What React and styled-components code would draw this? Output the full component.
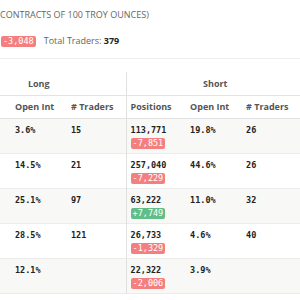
import React from "react";
import styled, { createGlobalStyle } from "styled-components";

const Global = createGlobalStyle`
  html, body { margin: 0; padding: 0; background: #fff; }
  body { overflow: hidden; width: 300px; height: 300px; }
`;

const Page = styled.div`
  width: 300px;
  height: 300px;
  overflow: hidden;
  font-family: "Open Sans", "Liberation Sans", sans-serif;
  color: #555;
`;

const Title = styled.div`
  font-size: 9px;
  line-height: 14px;
  color: #666;
  text-transform: uppercase;
  padding: 8px 0 0 0;
  white-space: nowrap;
`;

const Summary = styled.div`
  display: flex;
  align-items: center;
  gap: 8px;
  margin-top: 13px;
  padding: 0 0 11px 1px;
  border-bottom: 1px solid #eeeeee;
  font-size: 9px;
  line-height: 12px;
  color: #666;
`;

const Strong = styled.b`
  color: #222;
  font-weight: 700;
`;

const Badge = styled.span`
  display: inline-block;
  font-family: "DejaVu Sans Mono", "Liberation Mono", monospace;
  font-size: 8.5px;
  line-height: 11px;
  padding: 0 2px;
  border-radius: 2px;
  color: #fff;
  background: ${(p) => (p.$up ? "#62bd86" : "#f47f7f")};
`;

const Clip = styled.div`
  margin-top: 13px;
  overflow: hidden;
`;

const Table = styled.table`
  border-collapse: collapse;
  table-layout: fixed;
  width: 352px;
  margin-left: -48px;
`;

const GroupTh = styled.th`
  height: 23px;
  font-size: 9px;
  line-height: 12px;
  font-weight: 700;
  color: #555;
  text-align: center;
  border-bottom: 1px solid #e3e3e3;
  border-left: ${(p) => (p.$sep ? "1px solid #e0e0e0" : "none")};
  padding: 0;
`;

const ColTh = styled.th`
  height: 22px;
  font-size: 9px;
  line-height: 12px;
  font-weight: 700;
  color: #555;
  text-align: left;
  padding: 0 0 0 ${(p) => p.$pad || 4}px;
  white-space: nowrap;
  border-bottom: 1px solid #e3e3e3;
  border-left: ${(p) => (p.$sep ? "1px solid #e0e0e0" : "none")};
`;

const Row = styled.tr`
  background: ${(p) => (p.$alt ? "#f8f9f7" : "#fff")};
  border-bottom: 1px solid #ececec;
`;

const Td = styled.td`
  height: 35px;
  vertical-align: top;
  padding: 6px 0 0 ${(p) => p.$pad || 4}px;
  box-sizing: border-box;
  font-size: 0;
  line-height: 0;
  border-left: ${(p) => (p.$sep ? "1px solid #e0e0e0" : "none")};
`;

const Num = styled.div`
  font-family: "DejaVu Sans Mono", "Liberation Mono", monospace;
  font-weight: 700;
  font-size: 8.5px;
  line-height: 11px;
  color: #222;
  white-space: nowrap;
`;

const CellBadge = styled(Badge)`
  display: block;
  width: fit-content;
  margin-top: 2px;
`;

const rows = [
  { lOi: "3.6%", lTr: "15", sPos: "113,771", sChg: "-7,851", up: false, sOi: "19.8%", sTr: "26" },
  { lOi: "14.5%", lTr: "21", sPos: "257,040", sChg: "-7,229", up: false, sOi: "44.6%", sTr: "26" },
  { lOi: "25.1%", lTr: "97", sPos: "63,222", sChg: "+7,749", up: true, sOi: "11.0%", sTr: "32" },
  { lOi: "28.5%", lTr: "121", sPos: "26,733", sChg: "-1,329", up: false, sOi: "4.6%", sTr: "40" },
  { lOi: "12.1%", lTr: "", sPos: "22,322", sChg: "-2,006", up: false, sOi: "3.9%", sTr: "" },
];

export default function App() {
  return (
    <Page>
      <Global />
      <Title>Contracts of 100 troy ounces)</Title>
      <Summary>
        <Badge>-3,048</Badge>
        <span>
          Total Traders: <Strong>379</Strong>
        </span>
      </Summary>
      <Clip>
        <Table>
          <colgroup>
            <col style={{ width: 58 }} />
            <col style={{ width: 58 }} />
            <col style={{ width: 58 }} />
            <col style={{ width: 59 }} />
            <col style={{ width: 58 }} />
            <col style={{ width: 61 }} />
          </colgroup>
          <thead>
            <tr>
              <GroupTh colSpan={3}>Long</GroupTh>
              <GroupTh colSpan={3} $sep>Short</GroupTh>
            </tr>
            <tr>
              <ColTh aria-hidden="true" />
              <ColTh $pad={5}>Open Int</ColTh>
              <ColTh $pad={3}>&#35; Traders</ColTh>
              <ColTh $sep>Positions</ColTh>
              <ColTh $pad={5}>Open Int</ColTh>
              <ColTh $pad={3}>&#35; Traders</ColTh>
            </tr>
          </thead>
          <tbody>
            {rows.map((r, i) => (
              <Row key={i} $alt={i % 2 === 0}>
                <Td />
                <Td $pad={5}>
                  <Num>{r.lOi}</Num>
                </Td>
                <Td $pad={3}>
                  <Num>{r.lTr}</Num>
                </Td>
                <Td $sep>
                  <Num>{r.sPos}</Num>
                  <CellBadge $up={r.up}>{r.sChg}</CellBadge>
                </Td>
                <Td $pad={5}>
                  <Num>{r.sOi}</Num>
                </Td>
                <Td $pad={3}>
                  <Num>{r.sTr}</Num>
                </Td>
              </Row>
            ))}
          </tbody>
        </Table>
      </Clip>
    </Page>
  );
}
